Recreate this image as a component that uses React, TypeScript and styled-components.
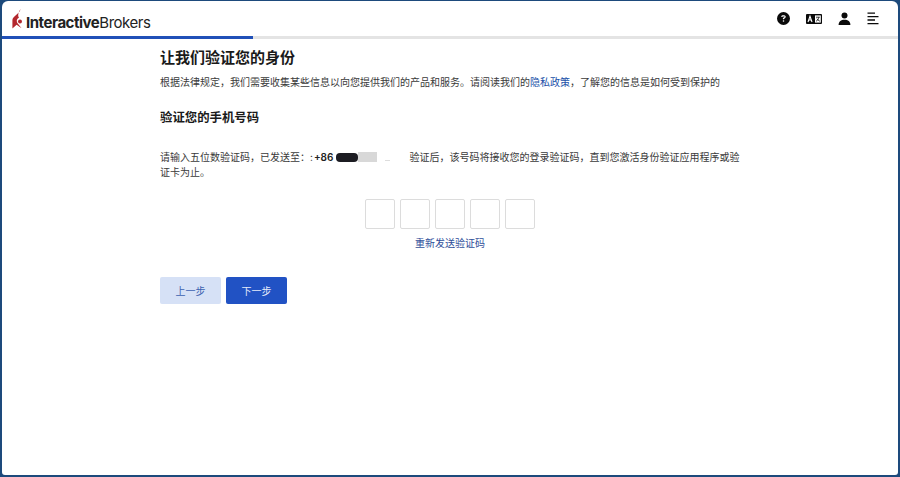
import React from 'react';
import styled, { createGlobalStyle } from 'styled-components';
import { FaCircleQuestion } from 'react-icons/fa6';

const GlobalStyle = createGlobalStyle`
  html, body {
    margin: 0;
    padding: 0;
    height: 100%;
    background: #1d4a7c;
  }
  #root {
    height: 100%;
  }
  * {
    box-sizing: border-box;
  }
`;

const Frame = styled.div`
  width: 900px;
  height: 477px;
  padding: 1px 2px 2px 2px;
  background: #1d4a7c;
  font-family: 'Inter', 'Noto Sans CJK SC', sans-serif;
  overflow: hidden;
`;

const Window = styled.div`
  height: 100%;
  background: #fff;
  border-radius: 6px 6px 3px 3px;
  overflow: hidden;
  display: flex;
  flex-direction: column;
`;

const Header = styled.header`
  height: 35px;
  flex: none;
  display: flex;
  align-items: center;
  justify-content: space-between;
  padding: 0 19px 0 10px;
`;

const Logo = styled.div`
  display: flex;
  align-items: flex-end;
  gap: 4px;
  font-family: 'Inter', 'Liberation Sans', sans-serif;
  font-size: 15px;
  line-height: 13px;
  letter-spacing: -0.47px;
  color: #222;
`;

const LogoMark = styled.svg`
  width: 10px;
  height: 20px;
`;

const LogoStrong = styled.b`
  font-weight: 700;
`;

const LogoLight = styled.span`
  font-weight: 400;
`;

const Icons = styled.div`
  display: flex;
  align-items: center;
  gap: 16px;
`;

const IconSlot = styled.span`
  height: 16px;
  display: flex;
  align-items: center;
  justify-content: center;
`;

const Progress = styled.div`
  height: 3px;
  flex: none;
  background: #e4e4e4;
`;

const ProgressFill = styled.div`
  height: 100%;
  background: #2050b8;
`;

const Main = styled.main`
  width: 582px;
  margin-left: 158px;
  display: flex;
  flex-direction: column;
`;

const Title = styled.h1`
  margin: 9px 0 0;
  font-size: 15px;
  line-height: 20px;
  font-weight: 700;
  color: #1a1a1a;
`;

const Lead = styled.p`
  margin: 6px 0 0;
  font-size: 10px;
  line-height: 16px;
  color: #3a3a3a;
`;

const Link = styled.a`
  color: #2050a8;
  text-decoration: none;
`;

const SubTitle = styled.h2`
  margin: 19px 0 0;
  font-size: 12.4px;
  line-height: 18px;
  font-weight: 700;
  color: #1a1a1a;
`;

const Message = styled.p`
  margin: 23px 0 0;
  font-size: 10px;
  line-height: 15px;
  color: #3a3a3a;
`;

const Phone = styled.b`
  margin-left: 1px;
  font-weight: 600;
  color: #222;
`;

const Scribble = styled.span`
  display: inline-block;
  vertical-align: -1px;
  width: 22px;
  height: 9px;
  margin-left: 3px;
  border-radius: 4px;
  background: #1c1c22;
`;

const Blur = styled.span`
  display: inline-block;
  vertical-align: -1px;
  width: 19px;
  height: 10px;
  background: #d8d8d8;
`;

const Smudge = styled.span`
  display: inline-block;
  vertical-align: 0;
  width: 5px;
  height: 1px;
  margin: 0 19px 0 8px;
  background: #ddd;
`;

const CodeSection = styled.div`
  margin-top: 19px;
  display: flex;
  flex-direction: column;
  align-items: center;
  gap: 6px;
  padding-right: 2px;
`;

const CodeRow = styled.div`
  display: flex;
  gap: 5px;
`;

const CodeBox = styled.input`
  width: 30px;
  height: 30px;
  padding: 0;
  border: 1px solid #dcdcdc;
  border-radius: 2px;
  background: #fff;
  outline: none;
`;

const Resend = styled.a`
  font-size: 10px;
  line-height: 16px;
  color: #2f4f9a;
  text-decoration: none;
`;

const Actions = styled.div`
  margin-top: 26px;
  display: flex;
  gap: 5px;
`;

const Button = styled.button<{ $primary?: boolean }>`
  width: 61px;
  height: 27px;
  padding: 0;
  border: none;
  border-radius: 2px;
  font-family: inherit;
  font-size: 10px;
  background: ${(p) => (p.$primary ? '#2152c4' : '#d6e1f6')};
  color: ${(p) => (p.$primary ? '#e6ecfa' : '#3d62b0')};
`;

const App: React.FC = () => {
  return (
    <>
      <GlobalStyle />
      <Frame>
        <Window>
          <Header>
            <Logo>
              <LogoMark viewBox="0 0 10 20">
                <path
                  d="M8.5 0 C8 3.5 4 5.5 1.5 8.5 C0.6 9.6 0.4 10.5 0.4 12 L0.4 19.5 L4.6 15.8 L9.6 19.2 L5.2 13.8 C4.2 11.5 5 9.5 7 8.8 C5.8 7 5.8 4 8.5 0 Z"
                  fill="#b3272d"
                />
                <circle cx="8" cy="12.4" r="2" fill="#b3272d" />
              </LogoMark>
              <span>
                <LogoStrong>Interactive</LogoStrong>
                <LogoLight>Brokers</LogoLight>
              </span>
            </Logo>
            <Icons>
              <IconSlot>
                <FaCircleQuestion size={13} color="#0a0a0a" />
              </IconSlot>
              <IconSlot>
                <svg width="16" height="10" viewBox="0 0 16 10">
                  <rect width="16" height="10" rx="1" fill="#0a0a0a" />
                  <rect x="9" y="1.4" width="5.8" height="7.2" fill="#fff" />
                  <path d="M2 8 L4 2.2 L6 8 M2.8 6 H5.2" stroke="#fff" strokeWidth="1.1" fill="none" />
                  <path d="M10 3.2 H13.8 M12.8 3.2 C12.6 5.4 11.4 6.6 10 7.2 M11 4.6 C11.6 5.8 12.6 6.8 13.9 7.2" stroke="#0a0a0a" strokeWidth="0.8" fill="none" />
                </svg>
              </IconSlot>
              <IconSlot>
                <svg width="13" height="14" viewBox="0 0 13 14">
                  <circle cx="6.5" cy="3.6" r="3" fill="#0a0a0a" />
                  <path d="M0.6 13 C0.6 9.6 3 7.8 6.5 7.8 C10 7.8 12.4 9.6 12.4 13 Z" fill="#0a0a0a" />
                </svg>
              </IconSlot>
              <IconSlot>
                <svg width="12" height="13" viewBox="0 0 12 13">
                  <path d="M0.5 1.2 H8 M0.5 4.6 H11.5 M0.5 8 H8 M0.5 11.6 H11.5" stroke="#0a0a0a" strokeWidth="1.3" />
                </svg>
              </IconSlot>
            </Icons>
          </Header>
          <Progress>
            <ProgressFill style={{ width: `${(251 / 896) * 100}%` }} />
          </Progress>
          <Main>
            <Title>让我们验证您的身份</Title>
            <Lead>
              根据法律规定，我们需要收集某些信息以向您提供我们的产品和服务。请阅读我们的<Link href="#">隐私政策</Link>，了解您的信息是如何受到保护的
            </Lead>
            <SubTitle>验证您的手机号码</SubTitle>
            <Message>
              请输入五位数验证码，已发送至：:<Phone>+86</Phone>
              <Scribble />
              <Blur />
              <Smudge />
              验证后，该号码将接收您的登录验证码，直到您激活身份验证应用程序或验证卡为止。
            </Message>
            <CodeSection>
              <CodeRow>
                {[0, 1, 2, 3, 4].map((i) => (
                  <CodeBox key={i} maxLength={1} aria-label={`验证码第${i + 1}位`} />
                ))}
              </CodeRow>
              <Resend href="#">重新发送验证码</Resend>
            </CodeSection>
            <Actions>
              <Button>上一步</Button>
              <Button $primary>下一步</Button>
            </Actions>
          </Main>
        </Window>
      </Frame>
    </>
  );
};

export default App;
